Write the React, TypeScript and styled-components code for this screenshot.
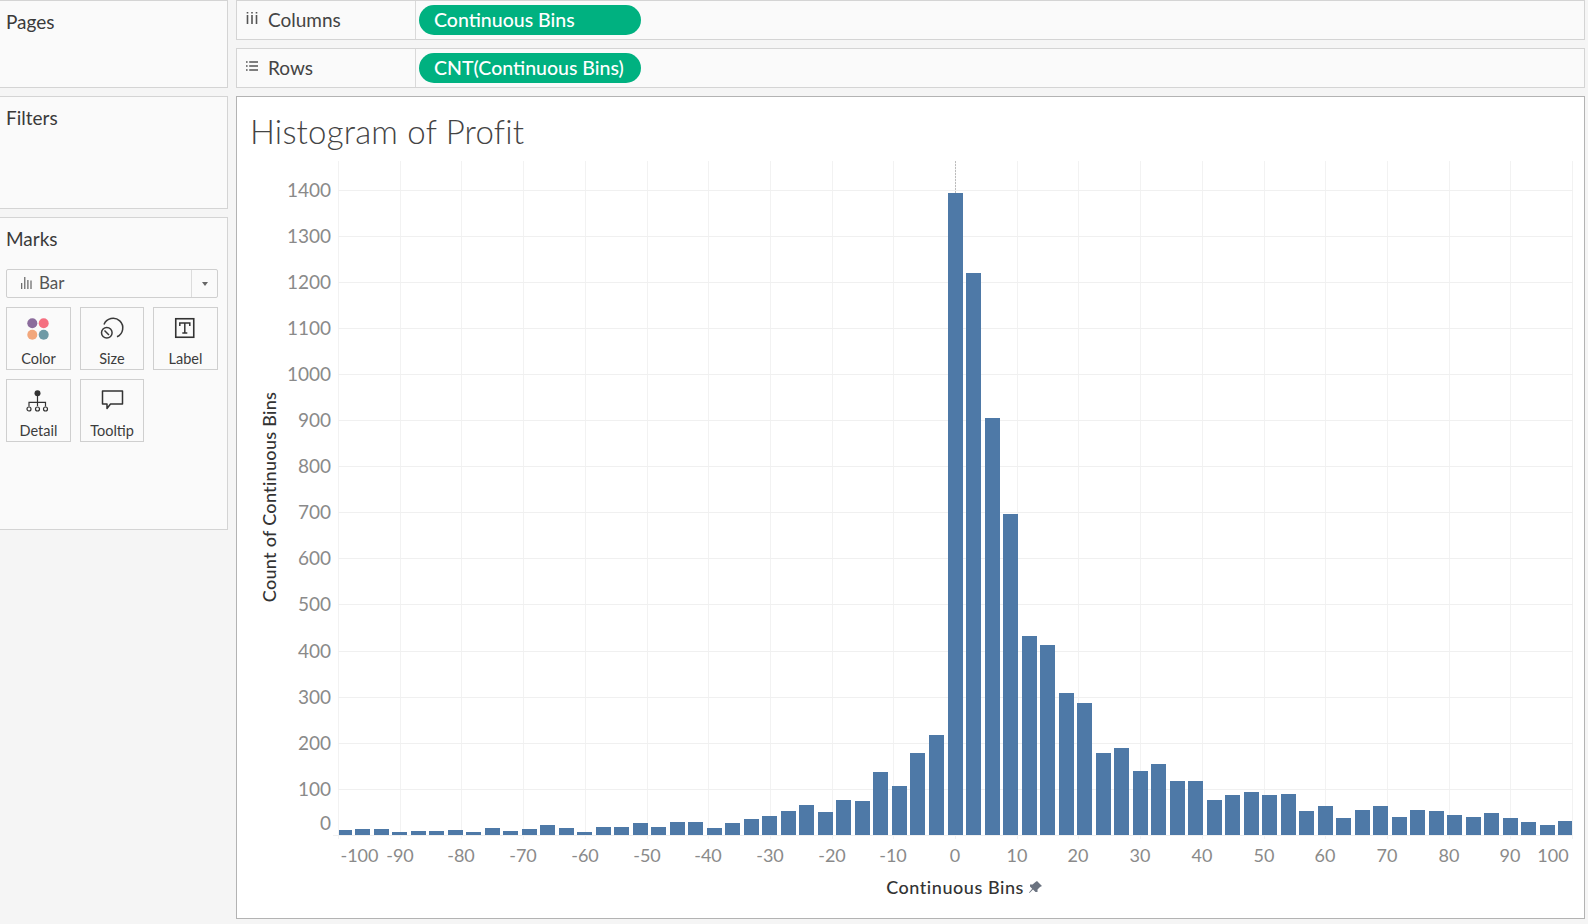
import React from "react";
import styled, { createGlobalStyle } from "styled-components";

const Global = createGlobalStyle`
  html, body { margin: 0; padding: 0; background: #f5f5f5; }
  body { font-family: Lato, "Open Sans", sans-serif; color: #333; overflow: hidden; }
`;

const Page = styled.div`
  width: 1588px;
  height: 924px;
  box-sizing: border-box;
  display: flex;
  gap: 8px;
  padding: 0 3px 5px 0;
`;

const Sidebar = styled.aside`
  width: 228px;
  flex: none;
  display: flex;
  flex-direction: column;
  gap: 8px;
`;

const Panel = styled.section<{ $h: number }>`
  height: ${(p) => p.$h}px;
  box-sizing: border-box;
  background: #fafafa;
  border: 1px solid #d4d4d4;
  border-left: 0;
  padding: 10px 6px 0 6px;
`;

const PanelTitle = styled.h2`
  margin: 0;
  font-size: 19px;
  font-weight: 400;
  line-height: 22px;
  color: #3a3a3a;
`;

const MarkSelect = styled.div`
  margin-top: 19px;
  height: 29px;
  width: 212px;
  box-sizing: border-box;
  display: flex;
  align-items: center;
  background: #fafafa;
  border: 1px solid #cfcfcf;
  border-radius: 2px;
`;

const SelectValue = styled.div`
  flex: 1;
  display: flex;
  align-items: center;
  gap: 7px;
  padding: 0 0 2px 14px;
  font-size: 17px;
  color: #555;
`;

const SelectCaret = styled.div`
  width: 25px;
  height: 100%;
  display: flex;
  align-items: center;
  justify-content: center;
  border-left: 1px solid #dcdcdc;
  &::after {
    content: "";
    border-left: 3.5px solid transparent;
    border-right: 3.5px solid transparent;
    border-top: 4px solid #666;
  }
`;

const Tiles = styled.div`
  margin-top: 9px;
  display: grid;
  grid-template-columns: 65px 64px 65px;
  column-gap: 9px;
  row-gap: 9px;
  width: 212px;
`;

const Tile = styled.div`
  height: 63px;
  box-sizing: border-box;
  border: 1px solid #cfcfcf;
  display: flex;
  flex-direction: column;
  align-items: center;
  padding-top: 7px;
  font-size: 14.5px;
  color: #3c3c3c;
  line-height: 18px;
  svg { display: block; height: 30px; width: 30px; margin: -1px 0 6px -1px; }
`;

const Main = styled.main`
  flex: 1;
  display: flex;
  flex-direction: column;
  gap: 8px;
  min-width: 0;
`;

const Shelf = styled.div`
  height: 40px;
  box-sizing: border-box;
  display: flex;
  background: #fafafa;
  border: 1px solid #d4d4d4;
`;

const ShelfHead = styled.div`
  width: 179px;
  flex: none;
  box-sizing: border-box;
  display: flex;
  align-items: center;
  gap: 10px;
  padding: 0 0 2px 9px;
  border-right: 1px solid #d9d9d9;
  font-size: 19px;
  color: #444;
  svg { width: 12px; height: 12px; margin-top: -2px; }
`;

const ShelfBody = styled.div`
  flex: 1;
  display: flex;
  align-items: center;
  padding-left: 3px;
`;

const Pill = styled.div`
  width: 222px;
  height: 30px;
  box-sizing: border-box;
  padding-left: 15px;
  border-radius: 15px;
  background: #00b180;
  color: #fff;
  font-size: 19.5px;
  line-height: 30px;
  font-weight: 500;
  white-space: nowrap;
`;

const Viz = styled.section`
  flex: 1;
  min-height: 0;
  box-sizing: border-box;
  background: #fff;
  border: 1px solid #b3b3b3;
  display: flex;
  flex-direction: column;
`;

const Title = styled.h1`
  margin: 0;
  height: 60px;
  box-sizing: border-box;
  padding: 16px 0 0 13px;
  font-size: 33px;
  line-height: 36px;
  font-weight: 300;
  color: #444;
  letter-spacing: 0.2px;
`;

const ChartSvg = styled.svg`
  display: block;
  width: 1347px;
  height: 760px;
  font-family: Lato, "Open Sans", sans-serif;
`;

const Tick = styled.text<{ $size: number }>`
  font-size: ${(p) => p.$size}px;
  fill: #8a8a8a;
  dominant-baseline: central;
`;

const AxisTitle = styled.text<{ $spacing: number }>`
  font-size: 18px;
  fill: #333;
  font-weight: 500;
  dominant-baseline: central;
  letter-spacing: ${(p) => p.$spacing}px;
`;

const starts = [339,355,374,392,411,429,448,466,485,503,522,540,559,577,596,614,633,651,670,688,707,725,744,762,781,799,818,836,855,873,892,910,929,948,966,985,1003,1022,1040,1059,1077,1096,1114,1133,1151,1170,1188,1207,1225,1244,1262,1281,1299,1318,1336,1355,1373,1392,1410,1429,1447,1466,1484,1503,1521,1540,1558];
const heights = [5,6,6,3,4,4,5,3,7,4,6,10,7,3,8,8,12,8,13,13,7,12,16,19,24,30,23,35,34,63,49,82,100,642,562,417,321,199,190,142,132,82,87,64,71,54,54,35,40,43,40,41,24,29,17,25,29,18,25,24,20,18,22,17,13,10,14];
const vGrid = [338,400,461,523,585,647,708,770,832,893,955,1017,1078,1140,1202,1264,1325,1387,1449,1510,1572];
const hGrid: [number, string][] = [
  [190,"1400"],[236,"1300"],[282,"1200"],[328,"1100"],[374,"1000"],[420,"900"],[466,"800"],[512,"700"],[558,"600"],[604,"500"],[651,"400"],[697,"300"],[743,"200"],[789,"100"],
];
const xLabels: [number, string][] = [
  [359.5,"-100"],[400,"-90"],[461,"-80"],[523,"-70"],[585,"-60"],[647,"-50"],[708,"-40"],[770,"-30"],[832,"-20"],[893,"-10"],[955,"0"],[1017,"10"],[1078,"20"],[1140,"30"],[1202,"40"],[1264,"50"],[1325,"60"],[1387,"70"],[1449,"80"],[1510,"90"],[1553,"100"],
];

const Chart = () => (
  <ChartSvg viewBox="237 157 1347 760">
    {vGrid.map((x) => (
      <rect key={x} x={x} y={161} width={1} height={678} fill="#f2f2f2" />
    ))}
    {hGrid.map(([y]) => (
      <rect key={y} x={338} y={y} width={1235} height={1} fill="#f0f0f0" />
    ))}
    <rect x={333} y={835} width={1240} height={1} fill="#f0f0f0" />
    <line x1={955.5} x2={955.5} y1={161} y2={193} stroke="#bdbdbd" strokeDasharray="2 1" />
    {starts.map((x, i) => (
      <rect
        key={x}
        x={x}
        y={835 - heights[i]}
        width={i === 0 ? 13 : i === 66 ? 14 : 15}
        height={heights[i]}
        fill="#4e79a7"
      />
    ))}
    {hGrid.map(([y, t]) => (
      <Tick key={t} $size={19} x={331} y={y - 0.5} textAnchor="end">{t}</Tick>
    ))}
    <Tick $size={19} x={331} y={822} textAnchor="end">0</Tick>
    {xLabels.map(([x, t]) => (
      <Tick key={t} $size={18} x={x} y={855} textAnchor="middle">{t}</Tick>
    ))}
    <AxisTitle $spacing={0.3} textAnchor="middle" transform="translate(269 497) rotate(-90)">Count of Continuous Bins</AxisTitle>
    <AxisTitle $spacing={0.55} x={955} y={887} textAnchor="middle">Continuous Bins</AxisTitle>
    <path
      d="M1037 881 L1042 886 L1040 887 L1037.5 889.5 L1037.5 892 L1035.5 892 L1033 889.5 L1029.5 893 L1029 892.5 L1032.2 888.7 L1030 886.5 L1030 884.5 L1032.5 884.5 L1035.5 882 Z"
      fill="#6b7380"
    />
  </ChartSvg>
);

const ColumnsIcon = () => (
  <svg viewBox="0 0 12 12"><path d="M1.5 3v9M6 3v9M10.5 3v9M1.5 0v1.4M6 0v1.4M10.5 0v1.4" stroke="#555" strokeWidth="1.6" fill="none" /></svg>
);
const RowsIcon = () => (
  <svg viewBox="0 0 12 12"><path d="M3.2 2H12M3.2 6H12M3.2 10H12M0 2h1.6M0 6h1.6M0 10h1.6" stroke="#555" strokeWidth="1.5" fill="none" /></svg>
);
const BarIcon = () => (
  <svg width="11" height="12" viewBox="0 0 11 12"><path d="M.7 6v6M3.8 0v12M6.9 3v9M10 3.5V12" stroke="#555" strokeWidth="1.1" fill="none" /></svg>
);
const ColorIcon = () => (
  <svg viewBox="0 0 30 30">
    <circle cx="9.3" cy="9.3" r="5" fill="#8b6c9c" />
    <circle cx="20.7" cy="9.3" r="5" fill="#f56f80" />
    <circle cx="9.3" cy="20.7" r="5" fill="#f2a77c" />
    <circle cx="20.7" cy="20.7" r="5" fill="#6f9aa6" />
  </svg>
);
const SizeIcon = () => (
  <svg viewBox="0 0 30 30" fill="none" stroke="#3a3a3a" strokeWidth="1.5">
    <path d="M7 10.5A9.7 9.7 0 1 1 20 22.8" />
    <circle cx="9.8" cy="18.7" r="5.3" />
    <path d="M7.5 16.5l4.5 4.5" />
  </svg>
);
const LabelIcon = () => (
  <svg viewBox="0 0 30 30" fill="none" stroke="#333">
    <rect x="5.75" y="4.75" width="18" height="18.5" strokeWidth="1.6" />
    <path d="M9.8 12v-3h10v3M14.8 9v10M12.3 19h5" strokeWidth="1.5" />
  </svg>
);
const DetailIcon = () => (
  <svg viewBox="0 0 30 30" fill="none" stroke="#333" strokeWidth="1.2">
    <circle cx="14.5" cy="7.3" r="3" fill="#333" stroke="none" />
    <path d="M14.5 10v10M6 20.5v-4.2h16.5v4.2" />
    <circle cx="6" cy="23" r="2" />
    <circle cx="14.5" cy="23" r="2" />
    <circle cx="22.5" cy="23" r="2" />
  </svg>
);
const TooltipIcon = () => (
  <svg viewBox="0 0 30 30" fill="none" stroke="#333" strokeWidth="1.5">
    <path d="M5.5 5h20v13H13.5L10 22.5V18H5.5z" strokeLinejoin="round" />
  </svg>
);

export default function App() {
  return (
    <Page>
      <Global />
      <Sidebar>
        <Panel $h={88}><PanelTitle>Pages</PanelTitle></Panel>
        <Panel $h={113}><PanelTitle>Filters</PanelTitle></Panel>
        <Panel $h={313}>
          <PanelTitle>Marks</PanelTitle>
          <MarkSelect>
            <SelectValue><BarIcon />Bar</SelectValue>
            <SelectCaret />
          </MarkSelect>
          <Tiles>
            <Tile><ColorIcon />Color</Tile>
            <Tile><SizeIcon />Size</Tile>
            <Tile><LabelIcon />Label</Tile>
            <Tile><DetailIcon />Detail</Tile>
            <Tile><TooltipIcon />Tooltip</Tile>
          </Tiles>
        </Panel>
      </Sidebar>
      <Main>
        <Shelf>
          <ShelfHead><ColumnsIcon />Columns</ShelfHead>
          <ShelfBody><Pill>Continuous Bins</Pill></ShelfBody>
        </Shelf>
        <Shelf>
          <ShelfHead><RowsIcon />Rows</ShelfHead>
          <ShelfBody><Pill>CNT(Continuous Bins)</Pill></ShelfBody>
        </Shelf>
        <Viz>
          <Title>Histogram of Profit</Title>
          <Chart />
        </Viz>
      </Main>
    </Page>
  );
}
